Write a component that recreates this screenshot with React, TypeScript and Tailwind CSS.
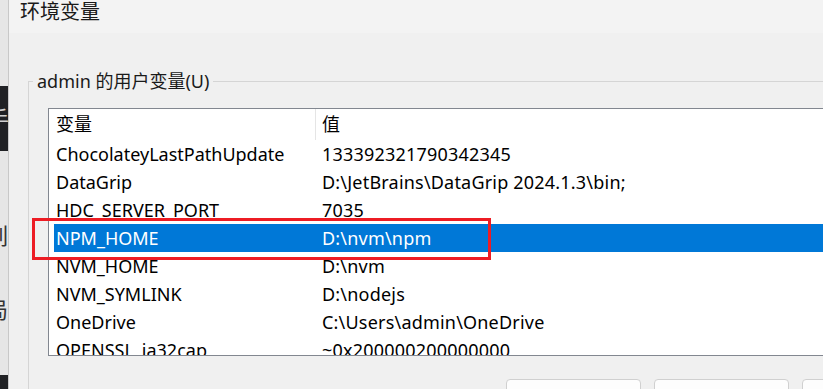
import React from 'react';

const rows = [
  { name: 'ChocolateyLastPathUpdate', value: '133392321790342345' },
  { name: 'DataGrip', value: 'D:\\JetBrains\\DataGrip 2024.1.3\\bin;' },
  { name: 'HDC_SERVER_PORT', value: '7035' },
  { name: 'NPM_HOME', value: 'D:\\nvm\\npm', selected: true },
  { name: 'NVM_HOME', value: 'D:\\nvm' },
  { name: 'NVM_SYMLINK', value: 'D:\\nodejs' },
  { name: 'OneDrive', value: 'C:\\Users\\admin\\OneDrive' },
  { name: 'OPENSSL_ia32cap', value: '~0x200000200000000' },
];

const ui = "font-['Noto_Sans','Noto_Sans_CJK_SC',sans-serif]";

export default function App() {
  return (
    <div className={`relative flex w-[823px] h-[389px] overflow-hidden bg-[#f0f0f0] text-black ${ui}`}>
      {/* window behind the dialog */}
      <div className="w-[8px] shrink-0 flex flex-col bg-[#e6e6e6] overflow-hidden">
        <div className="h-[86px]" />
        <div className="h-[65px] bg-[#202124] overflow-hidden">
          <div className="-ml-[13px] mt-[20px] text-[22px] leading-[22px] text-[#d0d0d0] font-['Noto_Sans_CJK_SC',sans-serif]">手</div>
        </div>
        <div className="h-[224px] overflow-hidden">
          <div className="-ml-[14px] mt-[71px] text-[22px] leading-[24px] text-[#333] font-['Noto_Sans_CJK_SC',sans-serif]">列</div>
          <div className="-ml-[14px] mt-[50px] text-[22px] leading-[24px] text-[#333] font-['Noto_Sans_CJK_SC',sans-serif]">局</div>
        </div>
        <div className="flex-1 bg-[#202124]" />
      </div>

      {/* dialog */}
      <div className="flex-1 flex flex-col border-l border-[#c8c8c8] min-w-0">
        <div className="h-[33px] shrink-0 bg-[#f3f3f3] pl-[11px]">
          <div className="text-[20px] leading-[22px] text-[#1a1a1a] font-['Noto_Sans_CJK_SC',sans-serif]">环境变量</div>
        </div>

        <div className="flex-1 bg-[#f0f0f0] pl-[19px]">
          <div className="mt-[48px] w-[1000px] h-[400px] border-l border-t border-[#d5d5d5]">
            <div className="-mt-[12px] ml-[4px] px-[4px] w-fit h-[22px] leading-[22px] text-[18px] bg-[#f0f0f0] text-[#1a1a1a]">
              admin 的用户变量(U)
            </div>

            <div className="ml-[19px] mt-[16px] w-[900px] h-[248px] border border-[#828790] bg-white overflow-hidden text-[18px]">
              <div className="flex h-[31px] items-center">
                <div className="w-[267px] h-full pl-[7px] flex items-center border-r border-[#e5e5e5]">变量</div>
                <div className="pl-[6px]">值</div>
              </div>
              {rows.map((r) => (
                <div
                  key={r.name}
                  className={`ml-[5px] flex h-[28px] items-center ${r.selected ? 'bg-[#0078d7] text-white' : ''}`}
                >
                  <div className="w-[262px] pl-[2px] whitespace-nowrap">{r.name}</div>
                  <div className="pl-[6px] whitespace-nowrap tracking-[0.2px]">{r.value}</div>
                </div>
              ))}
            </div>

            <div className="ml-[477px] mt-[23px] flex gap-[13px]">
              <div className="w-[135px] h-[32px] rounded-[4px] border border-[#d0d0d0] bg-[#fdfdfd]" />
              <div className="w-[135px] h-[32px] rounded-[4px] border border-[#d0d0d0] bg-[#fdfdfd]" />
              <div className="w-[135px] h-[32px] rounded-[4px] border border-[#d0d0d0] bg-[#fdfdfd]" />
            </div>
          </div>
        </div>
      </div>

      {/* red annotation box */}
      <div className="absolute left-[32px] top-[218px] w-[459px] h-[42px] border-[3px] border-[#ed1c24]" />
    </div>
  );
}
